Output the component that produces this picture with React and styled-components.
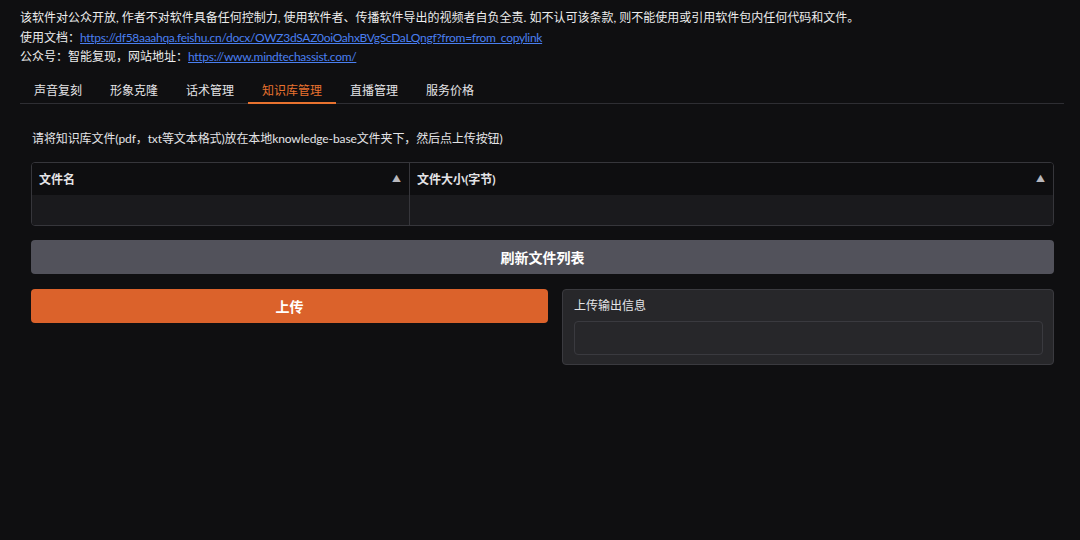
import styled, {createGlobalStyle} from "styled-components";

const GlobalStyle = createGlobalStyle`
  html, body {
    margin: 0;
    padding: 0;
    background: #0f0f11;
  }
  body {
    font-family: Lato, "Noto Sans CJK SC", sans-serif;
    color: #e4e4e7;
  }
`

const Page = styled.div`
  width: 1080px;
  height: 540px;
  box-sizing: border-box;
  padding: 8px 16px 0 20px;
  background: #0f0f11;
`
const Notice = styled.div`
  font-size: 12px;
  line-height: 19.5px;
  color: #ececec;

  a {
    color: #4a7ff0;
    text-decoration: underline;
    letter-spacing: -0.3px;
  }
`
const TabBar = styled.div`
  display: flex;
  margin-top: 11px;
  border-bottom: 1px solid #2e2e33;
`
const Tab = styled.div`
  padding: 0 14px;
  display: flex;
  align-items: center;
  font-size: 12px;
  color: ${p => p.active ? "#e8722f" : "#e4e4e7"};
  border-bottom: 2px solid ${p => p.active ? "#e8722f" : "transparent"};
  margin-bottom: -1px;
  box-sizing: border-box;
  height: 26px;
`
const Content = styled.div`
  padding: 26px 10px 0 11px;
  display: flex;
  flex-direction: column;
  gap: 14px;
`
const Hint = styled.div`
  font-size: 12px;
  line-height: 18px;
  color: #e4e4e7;
  padding-left: 1px;
  letter-spacing: -0.1px;
`
const Table = styled.div`
  border: 1px solid #36363b;
  border-radius: 4px;
  overflow: hidden;
  display: grid;
  grid-template-columns: 377px 1fr;
`
const HeadCell = styled.div`
  height: 32px;
  display: flex;
  align-items: center;
  justify-content: space-between;
  padding: 0 8px 0 7px;
  font-size: 12px;
  font-weight: 700;
  background: #0e0e10;
  border-left: ${p => p.first ? "none" : "1px solid #36363b"};
`
const Arrow = styled.span`
  font-size: 9px;
  color: #b8b8bd;
`
const BodyCell = styled.div`
  height: 30px;
  background: #1a1a1d;
  border-left: ${p => p.first ? "none" : "1px solid #36363b"};
`
const Button = styled.button`
  height: 34px;
  border: none;
  border-radius: 4px;
  font-family: inherit;
  font-size: 14px;
  font-weight: 700;
  color: #fff;
  background: ${p => p.primary ? "#db622b" : "#52525b"};
  cursor: pointer;
`
const Row = styled.div`
  display: grid;
  grid-template-columns: 517fr 492fr;
  gap: 14px;
  align-items: start;
  margin-top: 1px;
`
const Panel = styled.div`
  background: #27272a;
  border: 1px solid #3a3a3f;
  border-radius: 4px;
  padding: 7px 10px 9px 11px;
`
const Label = styled.div`
  font-size: 12px;
  line-height: 17px;
  color: #e4e4e7;
  margin-bottom: 7px;
`
const Output = styled.div`
  height: 32px;
  border: 1px solid #3a3a3f;
  border-radius: 4px;
  background: #27272a;
`

const tabs = ["声音复刻", "形象克隆", "话术管理", "知识库管理", "直播管理", "服务价格"]

const App = () => {
    return (
        <Page>
            <GlobalStyle/>
            <Notice>
                <div>该软件对公众开放, 作者不对软件具备任何控制力, 使用软件者、传播软件导出的视频者自负全责. 如不认可该条款, 则不能使用或引用软件包内任何代码和文件。</div>
                <div>使用文档：<a href="#">https://df58aaahqa.feishu.cn/docx/OWZ3dSAZ0oiOahxBVgScDaLQngf?from=from_copylink</a></div>
                <div>公众号：智能复现，网站地址：<a href="#">https://www.mindtechassist.com/</a></div>
            </Notice>
            <TabBar>
                {tabs.map(t => <Tab key={t} active={t === "知识库管理"}>{t}</Tab>)}
            </TabBar>
            <Content>
                <Hint>请将知识库文件(pdf，txt等文本格式)放在本地knowledge-base文件夹下，然后点上传按钮)</Hint>
                <Table>
                    <HeadCell first>文件名<Arrow>▲</Arrow></HeadCell>
                    <HeadCell>文件大小(字节)<Arrow>▲</Arrow></HeadCell>
                    <BodyCell first/>
                    <BodyCell/>
                </Table>
                <Button>刷新文件列表</Button>
                <Row>
                    <Button primary>上传</Button>
                    <Panel>
                        <Label>上传输出信息</Label>
                        <Output/>
                    </Panel>
                </Row>
            </Content>
        </Page>
    )
}

export default App
